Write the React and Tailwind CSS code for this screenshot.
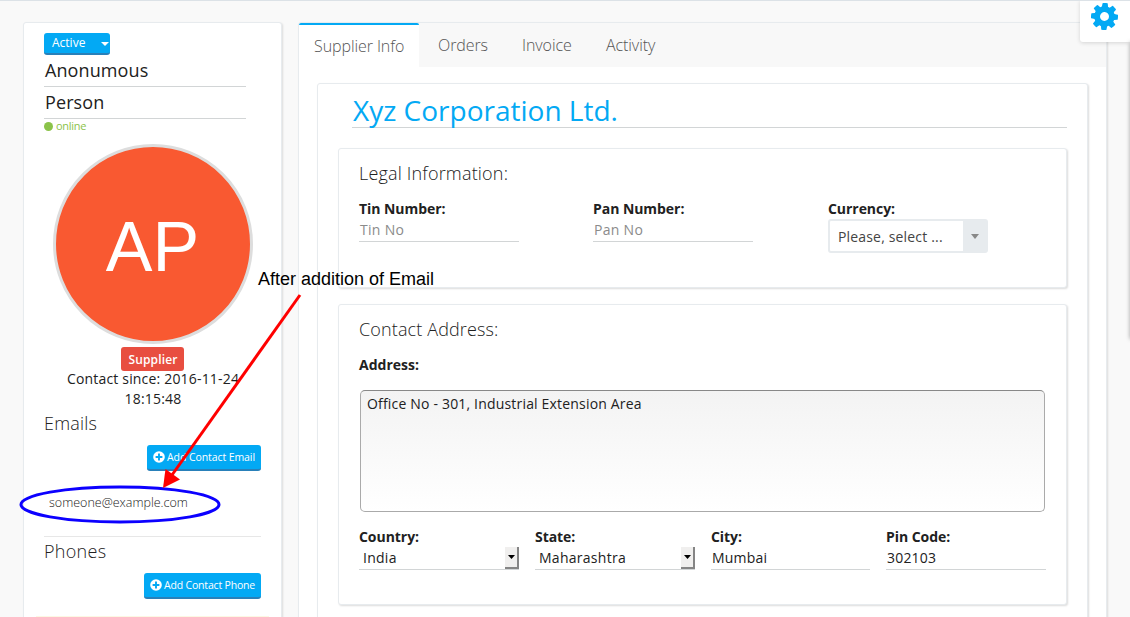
import React from "react";

const COG =
  "M1024 896q0-106-75-181t-181-75-181 75-75 181 75 181 181 75 181-75 75-181zm512-109v222q0 12-8 23t-20 13l-185 28q-19 54-39 91 35 50 107 138 10 12 10 25t-9 23q-27 37-99 108t-94 71q-12 0-26-9l-138-108q-44 23-91 38-16 136-29 186-7 28-36 28h-222q-14 0-24.5-8.5t-11.5-21.5l-28-184q-49-16-90-37l-141 107q-10 9-25 9-14 0-25-11-126-114-165-168-7-10-7-23 0-12 8-23 15-21 51-66.5t54-70.5q-27-50-41-99l-183-27q-13-2-21-12.5t-8-23.5v-222q0-12 8-23t19-13l186-28q14-46 39-92-40-57-107-138-10-12-10-24 0-10 9-23 26-36 98.5-107.5t94.5-71.5q13 0 26 10l138 107q44-23 91-38 16-136 29-186 7-28 36-28h222q14 0 24.5 8.5t11.5 21.5l28 184q49 16 90 37l142-107q9-9 24-9 13 0 25 10 129 119 165 170 7 8 7 22 0 12-8 23-15 21-51 66.5t-54 70.5q26 50 41 98l183 28q13 2 21 12.5t8 23.5z";

function PlusCircle() {
  return (
    <svg className="mt-px h-3 w-3 shrink-0" viewBox="0 0 12 12">
      <circle cx="6" cy="6" r="5.8" fill="#fff" />
      <path d="M6 2.6v6.8M2.6 6h6.8" stroke="#03a9f4" strokeWidth="1.9" />
    </svg>
  );
}

function AddButton({ className, children }) {
  return (
    <button
      className={`flex h-[26px] items-center gap-0.5 rounded-[3px] border-b-2 border-[#2980b9] bg-[#03a9f4] pb-px pl-1.5 text-[10.5px] leading-none whitespace-nowrap text-white ${className}`}
    >
      <PlusCircle />
      <span className="pt-0.5">{children}</span>
    </button>
  );
}

function NameField({ children }) {
  return (
    <div className="h-8 w-[202px] border-b border-[#d2d5d6] pl-px text-lg leading-[31px] tracking-[0.1px]">
      {children}
    </div>
  );
}

function Field({ className = "w-40", label, children }) {
  return (
    <div className={className}>
      <div className="h-5 font-bold leading-5 tracking-[-0.05px]">{label}</div>
      {children}
    </div>
  );
}

function TextInput({ children, placeholder }) {
  return (
    <div
      className={`h-[23px] border-b border-[#d2d5d6] pl-px leading-[22px] ${
        placeholder ? "tracking-[0.3px] text-[#8b8b8b]" : "tracking-[0.2px]"
      }`}
    >
      {children}
    </div>
  );
}

function NativeSelect({ children }) {
  return (
    <div className="flex h-[23px] justify-between border-b border-[#d2d5d6] pl-1 leading-[22px] tracking-[0.27px]">
      {children}
      <span className="flex h-[22px] w-3.5 items-center justify-center border-r-2 border-b-2 border-[#858585] bg-[#f0efee]">
        <svg className="h-1 w-[7px]" viewBox="0 0 7 4">
          <path d="M0 0h7L3.5 4z" fill="#000" />
        </svg>
      </span>
    </div>
  );
}

function Box({ className, children }) {
  return (
    <section
      className={`rounded-[3px] border border-[#e7ebee] bg-white px-5 shadow-[1px_1px_2px_0_#dcdcdc] ${className}`}
    >
      {children}
    </section>
  );
}

function Sidebar() {
  return (
    <aside className="flex h-[640px] w-[259px] flex-col items-start rounded-t-[3px] border border-[#e7ebee] bg-white px-5 pt-2.5 shadow-[1px_1px_2px_0_#dcdcdc]">
      <button className="flex h-[22px] w-[66px] items-center justify-between rounded-[3px] border-b-2 border-[#2980b9] bg-[#03a9f4] pr-px pl-2 text-xs leading-none text-white">
        Active
        <svg className="mt-0.5 h-1 w-2" viewBox="0 0 8 4">
          <path d="M0 0h8L4 4z" fill="#fff" />
        </svg>
      </button>
      <NameField>Anonumous</NameField>
      <NameField>Person</NameField>
      <div className="flex h-[15px] items-center gap-[3px] text-[11px] leading-none tracking-[-0.3px] text-[#8bc34a]">
        <span className="h-[9px] w-[9px] rounded-full bg-[#8bc34a]" />
        <span className="pb-0.5">online</span>
      </div>
      <div className="mt-2.5 flex h-[200px] w-[200px] items-center justify-center self-center rounded-full border-[3px] border-[#ddd] bg-[#f95931] pt-[5px] font-['Liberation_Sans',sans-serif] text-[70px] leading-none text-white">
        AP
      </div>
      <span className="mt-[3px] h-6 w-[63px] self-center rounded-[3px] bg-[#e84e40] pl-px text-center text-xs leading-[25px] font-semibold tracking-[0.15px] text-white">
        Supplier
      </span>
      <p className="-mt-0.5 self-stretch pl-px text-center leading-5 tracking-[0.18px]">
        Contact since: 2016-11-24 18:15:48
      </p>
      <h3 className="mt-[3px] text-lg leading-[22px] font-light tracking-[0.2px]">
        Emails
      </h3>
      <div className="mt-[11px] self-end">
        <AddButton className="w-[114px] tracking-[-0.08px]">
          Add Contact Email
        </AddButton>
      </div>
      <div className="mt-5 h-6 pl-[5px] text-[12.5px] leading-6 font-light">
        someone@example.com
      </div>
      <hr className="mt-[21px] w-full border-[#e7e7e7]" />
      <h3 className="mt-[3px] text-lg leading-[22px] font-light tracking-[0.3px]">
        Phones
      </h3>
      <div className="mt-[11px] self-end">
        <AddButton className="w-[117px] tracking-[-0.18px]">
          Add Contact Phone
        </AddButton>
      </div>
      <div className="-mx-2 mt-[17px] h-5 w-[233px] bg-[#fcf8e3]" />
    </aside>
  );
}

function Tabs() {
  return (
    <nav className="flex h-11 bg-[#f8f8f8] text-base font-light tracking-[-0.08px] text-[#555]">
      <div className="w-[120px] rounded-t-[2px] border-t-2 border-[#03a9f4] bg-white pl-[15px] leading-[43px]">
        Supplier Info
      </div>
      <div className="w-[84px] pl-[19px] leading-[44px]">Orders</div>
      <div className="w-[84px] pl-[19px] leading-[44px]">Invoice</div>
      <div className="w-[84px] pl-[19px] leading-[44px]">Activity</div>
    </nav>
  );
}

function Main() {
  return (
    <main className="h-[640px] w-[809px] rounded-t-[3px] border border-[#e7ebee] bg-white shadow-[1px_1px_2px_0_#dcdcdc]">
      <Tabs />
      <Box className="mt-4 mr-[18px] ml-[18px] h-[600px]">
        <h1 className="ml-3.5 h-11 border-b border-[#d2d5d6] pl-px text-[28px] leading-[52px] text-[#03a9f4]">
          Xyz Corporation Ltd.
        </h1>
        <Box className="mt-5 h-[140px] pt-3">
          <h2 className="text-lg leading-6 font-light tracking-[0.18px]">
            Legal Information:
          </h2>
          <div className="mt-3.5 grid grid-cols-[234px_235px_160px]">
            <Field label="Tin Number:">
              <TextInput placeholder>Tin No</TextInput>
            </Field>
            <Field label="Pan Number:">
              <TextInput placeholder>Pan No</TextInput>
            </Field>
            <Field label="Currency:">
              <div className="flex h-[34px] justify-between rounded-[3px] border-2 border-[#e7ebee] bg-white pl-2 leading-[31px] tracking-[0.17px] text-[#444]">
                Please, select ...
                <span className="flex w-[23px] items-center justify-center bg-[#e7ebee]">
                  <svg className="h-[5px] w-2" viewBox="0 0 8 5">
                    <path d="M0 0h8L4 5z" fill="#888" />
                  </svg>
                </span>
              </div>
            </Field>
          </div>
        </Box>
        <Box className="mt-4 h-[301px] pt-3">
          <h2 className="text-lg leading-6 font-light tracking-[0.13px]">
            Contact Address:
          </h2>
          <div className="mt-3.5 font-bold leading-5">Address:</div>
          <div className="mt-[15px] ml-px h-[122px] w-[685px] rounded-[5px] border border-[#aaa] border-t-[#888] bg-linear-to-b from-[#f3f3f3] to-white px-1.5 pt-[3px] leading-5 tracking-[0.18px]">
            Office No - 301, Industrial Extension Area
          </div>
          <div className="mt-[15px] grid grid-cols-[176px_176px_175px_160px]">
            <Field label="Country:">
              <NativeSelect>India</NativeSelect>
            </Field>
            <Field label="State:">
              <NativeSelect>Maharashtra</NativeSelect>
            </Field>
            <Field className="w-[159px]" label="City:">
              <TextInput>Mumbai</TextInput>
            </Field>
            <Field label="Pin Code:">
              <TextInput>302103</TextInput>
            </Field>
          </div>
        </Box>
      </Box>
    </main>
  );
}

export default function App() {
  return (
    <div className="relative h-[617px] w-[1130px] overflow-hidden border-t border-[#dce2e7] bg-[#f9f9f9] font-['Open_Sans',sans-serif] text-sm text-[#212121]">
      <div className="flex gap-4 pt-[21px] pl-[23px]">
        <Sidebar />
        <Main />
      </div>

      <div className="absolute -top-px right-0 flex h-[42px] w-[50px] justify-center rounded-bl-[3px] bg-white pt-[3px] pr-px shadow-[0_1px_4px_rgba(0,0,0,0.15)]">
        <svg className="h-[27px] w-[27px] rotate-3" viewBox="0 128 1536 1536">
          <path d={COG} fill="#03a9f4" />
        </svg>
      </div>
      <div className="absolute top-[41px] -right-1 h-[297px] w-1 shadow-[0_0_4px_rgba(0,0,0,0.35)]" />

      <svg className="absolute -top-px left-0 h-[617px] w-[1130px]" viewBox="0 0 1130 617">
        <ellipse cx="120" cy="504.500" rx="99" ry="17.500" fill="none" stroke="#0c00ff" strokeWidth="3" />
        <path d="M300 295L172 475" stroke="#f00" strokeWidth="3" />
        <path d="M163 488L165.500 469L180 479.500z" fill="#f00" />
      </svg>
      <div className="absolute top-[267px] left-[258px] font-['Liberation_Sans',sans-serif] text-lg leading-[22px] whitespace-nowrap text-black">
        After addition of Email
      </div>
    </div>
  );
}
